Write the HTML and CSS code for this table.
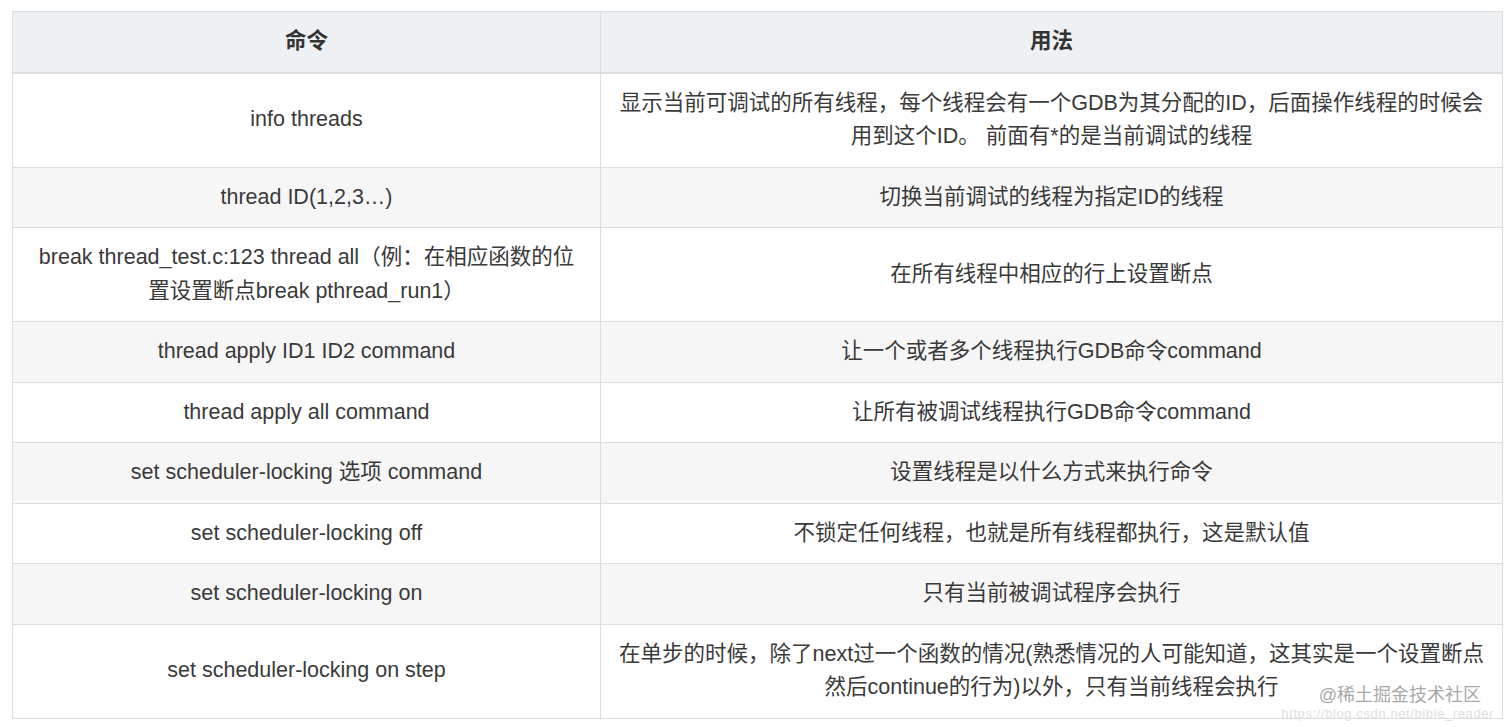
FILE: index.html
```html
<!DOCTYPE html>
<html lang="zh-CN">
<head>
<meta charset="utf-8">
<title>GDB 多线程调试命令</title>
<link rel="stylesheet" href="styles.css">
</head>
<body>
<div class="page">
  <table class="cmd-table">
    <colgroup>
      <col class="col-cmd">
      <col class="col-use">
    </colgroup>
    <thead>
      <tr><th>命令</th><th>用法</th></tr>
    </thead>
    <tbody>
      <tr><td>info threads</td><td>显示当前可调试的所有线程，每个线程会有一个GDB为其分配的ID，后面操作线程的时候会用到这个ID。 前面有*的是当前调试的线程</td></tr>
      <tr><td>thread ID(1,2,3…)</td><td>切换当前调试的线程为指定ID的线程</td></tr>
      <tr><td>break thread_test.c:123 thread all（例：在相应函数的位置设置断点break pthread_run1）</td><td>在所有线程中相应的行上设置断点</td></tr>
      <tr><td>thread apply ID1 ID2 command</td><td>让一个或者多个线程执行GDB命令command</td></tr>
      <tr><td>thread apply all command</td><td>让所有被调试线程执行GDB命令command</td></tr>
      <tr><td>set scheduler-locking 选项 command</td><td>设置线程是以什么方式来执行命令</td></tr>
      <tr><td>set scheduler-locking off</td><td>不锁定任何线程，也就是所有线程都执行，这是默认值</td></tr>
      <tr><td>set scheduler-locking on</td><td>只有当前被调试程序会执行</td></tr>
      <tr><td>set scheduler-locking on step</td><td>在单步的时候，除了next过一个函数的情况(熟悉情况的人可能知道，这其实是一个设置断点然后continue的行为)以外，只有当前线程会执行</td></tr>
    </tbody>
  </table>
  <div class="watermark">
    <span class="wm-main">@稀土掘金技术社区</span>
    <span class="wm-url">https://blog.csdn.net/bible_reader</span>
  </div>
</div>
</body>
</html>
```
FILE: styles.css
```css
html, body {
  margin: 0;
  padding: 0;
  background: #ffffff;
}
body {
  font-family: "Liberation Sans", "Noto Sans CJK SC", sans-serif;
  color: #3a3a3a;
}
.page {
  position: relative;
  padding: 11px 0 0 12px;
  width: 1490px;
  height: 716px;
}
.cmd-table {
  border-collapse: collapse;
  table-layout: fixed;
  width: 1490px;
  font-size: 21.5px;
  line-height: 33.5px;
}
.col-cmd { width: 588px; }
.col-use { width: 902px; }
.cmd-table th,
.cmd-table td {
  border: 1px solid #dcdcdc;
  padding: 13px 12px;
  text-align: center;
  vertical-align: middle;
}
.cmd-table td:first-child {
  padding-left: 20px;
  padding-right: 20px;
}
.cmd-table th {
  background: #eef1f3;
  font-weight: bold;
  color: #333333;
  border-bottom: 2px solid #dcdfe1;
}
.cmd-table tbody tr:nth-child(even) td {
  background: #f6f6f6;
}
.watermark {
  position: absolute;
  top: 685px;
  right: 8px;
  display: flex;
  flex-direction: column;
  align-items: flex-end;
  gap: 1px;
  pointer-events: none;
}
.wm-main {
  font-size: 18px;
  line-height: 21px;
  color: #a9a9a9;
  margin-right: 13px;
}
.wm-url {
  font-size: 13px;
  line-height: 13px;
  color: #e0e0e0;
  letter-spacing: 0.6px;
}
```
